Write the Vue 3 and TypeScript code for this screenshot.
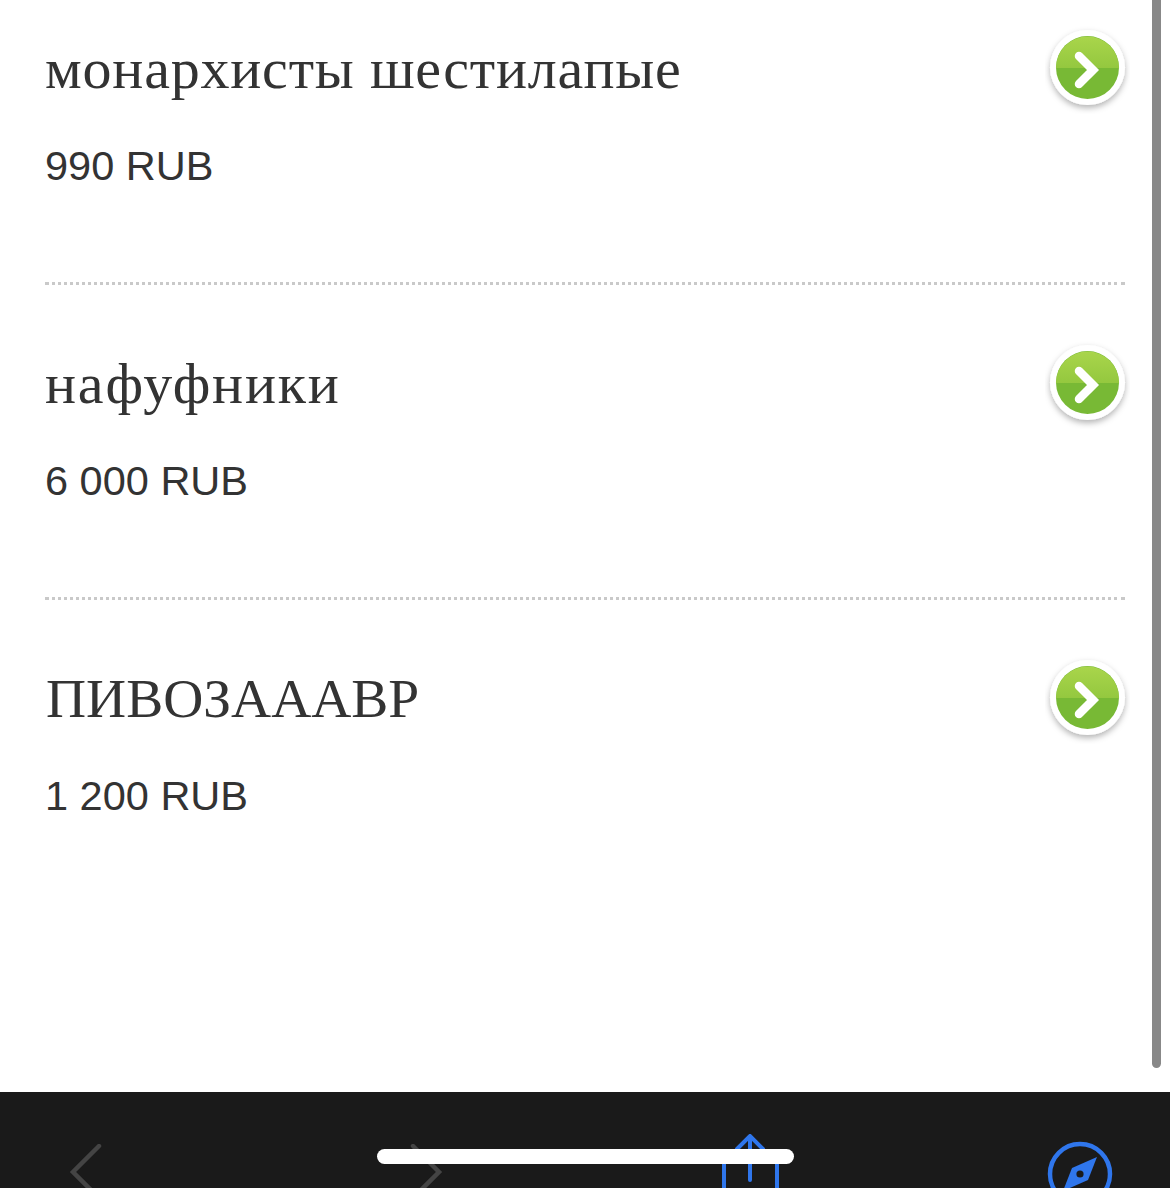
<script setup lang="ts">
interface Item { id: string; name: string; price: string; caps: boolean; tracking: number }
const items: Item[] = [
  { id: 'a', name: 'монархисты шестилапые', price: '990 RUB', caps: false, tracking: 0.8 },
  { id: 'b', name: 'нафуфники', price: '6 000 RUB', caps: false, tracking: 1.8 },
  { id: 'c', name: 'ПИВОЗАААВР', price: '1 200 RUB', caps: true, tracking: 0 },
]
</script>

<template>
  <div class="page">
    <main class="content">
      <article v-for="item in items" :key="item.id" class="item">
        <div class="text">
          <h2 class="name" :class="{ caps: item.caps }" :style="{ letterSpacing: item.tracking + 'px' }">{{ item.name }}</h2>
          <p class="price">{{ item.price }}</p>
        </div>
        <svg class="go" width="85" height="89" viewBox="0 0 85 89" aria-hidden="true">
          <defs>
            <filter :id="'s' + item.id" x="-30%" y="-30%" width="160%" height="160%">
              <feDropShadow dx="0" dy="3" stdDeviation="3" flood-color="#000" flood-opacity="0.3" />
            </filter>
            <linearGradient :id="'t' + item.id" x1="0" y1="0" x2="0" y2="1">
              <stop offset="0" stop-color="#a9d54b" />
              <stop offset="1" stop-color="#94c83f" />
            </linearGradient>
          </defs>
          <circle cx="42.5" cy="42.5" r="37.5" fill="#fff" :filter="'url(#s' + item.id + ')'" />
          <circle cx="42.5" cy="42.5" r="31.5" fill="#78b935" />
          <path d="M11 43a31.5 31.5 0 0 1 63 0z" :fill="'url(#t' + item.id + ')'" />
          <path d="M34 31 48 45 34 59" fill="none" stroke="#fff" stroke-width="8.5" stroke-linecap="round" stroke-linejoin="miter" />
        </svg>
      </article>
    </main>
    <footer class="dock">
      <svg class="dock-icon back" width="34" height="50" viewBox="0 0 34 50"><path d="M30 2 4 28 30 54" fill="none" stroke="#444" stroke-width="4.5" stroke-linecap="round" /></svg>
      <svg class="dock-icon forward" width="34" height="50" viewBox="0 0 34 50"><path d="M4 2 30 28 4 54" fill="none" stroke="#444" stroke-width="4.5" stroke-linecap="round" /></svg>
      <svg class="dock-icon share" width="60" height="56" viewBox="0 0 60 56"><path d="M30 4V46M17 15 30 2 43 15M19 26H4V70H57V26H41" fill="none" stroke="#2f76ec" stroke-width="4" stroke-linecap="round" /></svg>
      <svg class="dock-icon compass" width="68" height="50" viewBox="0 0 68 50">
        <circle cx="34" cy="33" r="30" fill="none" stroke="#2f76ec" stroke-width="4.5" />
        <path d="M51 16 26 27 17 50 42 39z" fill="#2f76ec" />
        <circle cx="34" cy="33" r="3.6" fill="#1a1a1a" />
      </svg>
    </footer>
    <div class="scrollbar"></div>
    <div class="home"></div>
  </div>
</template>

<style scoped>
.page {
  position: relative;
  width: 1170px;
  height: 1188px;
  overflow: hidden;
  background: #fff;
  display: flex;
  flex-direction: column;
}
.content {
  flex: 1;
  padding: 0 45px;
}
.item {
  height: 315px;
  box-sizing: border-box;
  border-bottom: 3px dotted #c9c9c9;
  display: flex;
  justify-content: space-between;
  align-items: flex-start;
}
.item:first-child {
  height: 285px;
}
.item:first-child .text {
  padding-top: 37px;
}
.item:first-child .go {
  margin-top: 25px;
}
.item:last-child {
  border-bottom: 0;
}
.text {
  padding-top: 67px;
}
.go {
  margin-top: 55px;
  margin-right: -5px;
}
.name {
  margin: 0;
  font: 400 58px/64px "Liberation Serif", serif;
  color: #333;
}
.name.caps {
  font-size: 55.5px;
  padding-left: 1px;
}
.price {
  margin: 41px 0 0;
  font: 400 41.5px/48px "Liberation Sans", sans-serif;
  color: #333;
}
.dock {
  position: relative;
  height: 96px;
  flex: none;
  background: #1a1a1a;
  overflow: hidden;
}
.dock-icon {
  position: absolute;
}
.back { left: 69px; top: 52px; }
.forward { left: 409px; top: 52px; }
.share { left: 720px; top: 42px; }
.compass { left: 1046px; top: 49px; }
.scrollbar {
  position: absolute;
  left: 1152px;
  top: 0;
  width: 9px;
  height: 1068px;
  background: #888;
  border-radius: 0 0 5px 5px;
}
.home {
  position: absolute;
  left: 377px;
  top: 1149px;
  width: 417px;
  height: 15px;
  border-radius: 8px;
  background: #fff;
}
</style>
